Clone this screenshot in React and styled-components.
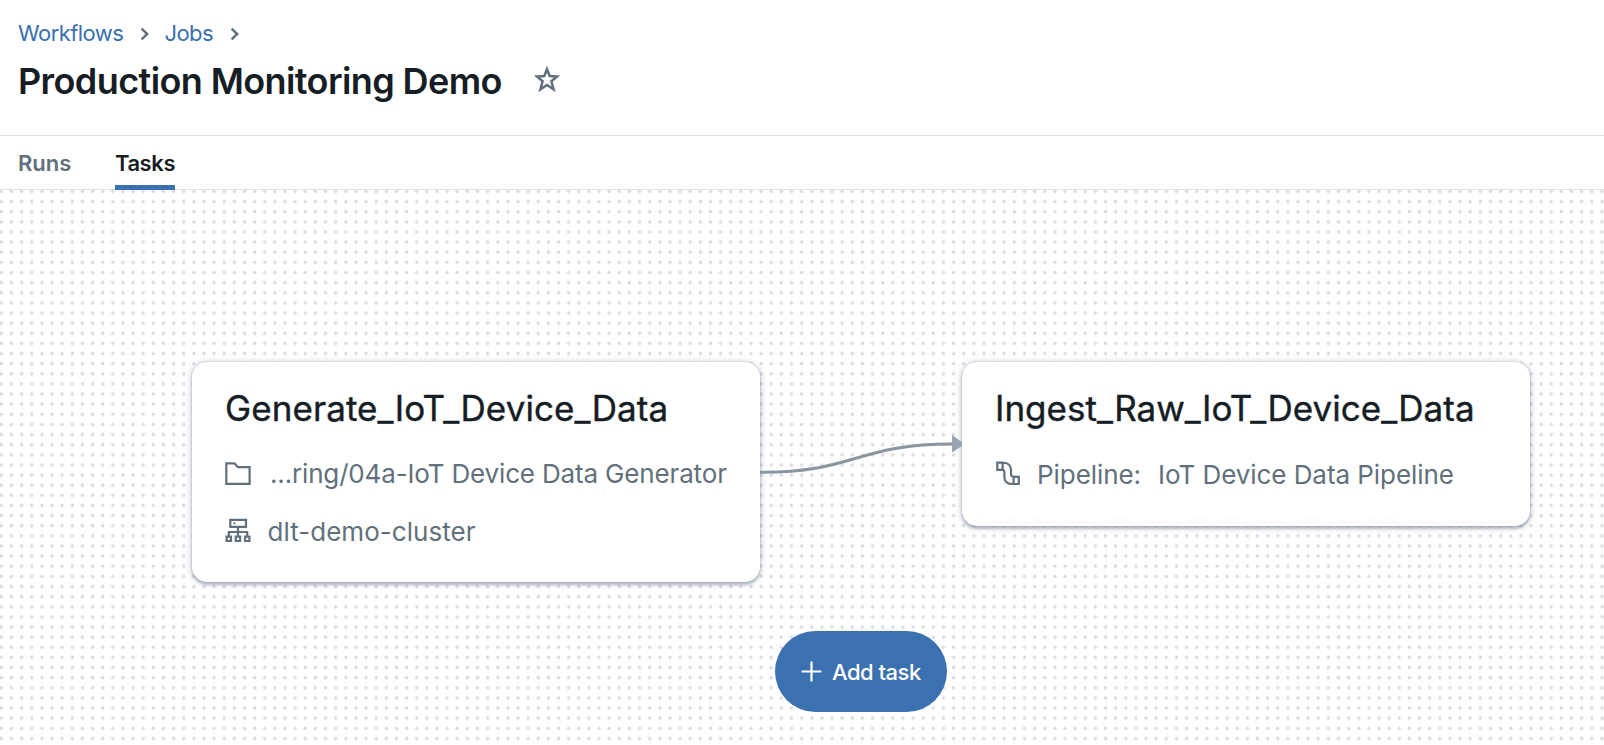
import React from 'react';
import styled, { createGlobalStyle } from 'styled-components';

const GlobalStyle = createGlobalStyle`
  * { box-sizing: border-box; }
  html, body { margin: 0; padding: 0; background: #fff; overflow: hidden; }
  body { font-family: Inter, "Liberation Sans", sans-serif; color: #161d24; }
`;

const Page = styled.div`
  width: 100%;
  height: 100vh;
  display: flex;
  flex-direction: column;
`;

const Header = styled.header`
  height: 136px;
  padding: 20px 18px 0;
  border-bottom: 1px solid #dfe1e8;
  flex: none;
`;

const Breadcrumbs = styled.nav`
  display: flex;
  align-items: center;
  height: 27px;
  line-height: 27px;
  font-size: 22px;
  letter-spacing: -0.55px;
  color: #3a6fb0;
`;

const Crumb = styled.a`
  color: inherit;
`;

const Chevron = styled.svg`
  width: 10px;
  height: 14px;
  margin: 0 14.5px 0 16.5px;
  fill: none;
  stroke: #62707d;
  stroke-width: 2.5;
`;

const TitleRow = styled.div`
  display: flex;
  align-items: center;
  margin-top: 12px;
`;

const Title = styled.h1`
  margin: 0;
  font-size: 36px;
  line-height: 44px;
  font-weight: 600;
  letter-spacing: -0.6px;
`;

const Star = styled.svg`
  width: 28px;
  height: 28px;
  margin: -4px 0 0 31px;
  fill: none;
  stroke: #62707d;
  stroke-width: 2.5;
`;

const Tabs = styled.div`
  display: flex;
  flex: none;
  height: 54px;
  gap: 43.5px;
  padding: 0 18px;
  border-bottom: 1px solid #dfe1e8;
`;

const Tab = styled.button`
  height: 54px;
  padding: 14px 0 9px;
  border: 0;
  border-bottom: 5px solid ${(p) => (p.$active ? '#3a70b2' : 'transparent')};
  background: none;
  font: 600 22px/26px Inter, sans-serif;
  letter-spacing: ${(p) => (p.$active ? '-0.4px' : '0')};
  color: ${(p) => (p.$active ? '#161d24' : '#62707d')};
`;

const Canvas = styled.main`
  position: relative;
  flex: 1;
  overflow: hidden;
`;

const Backdrop = styled.svg`
  position: absolute;
  inset: 0;
  width: 100%;
  height: 100%;
`;

const Node = styled.section`
  position: absolute;
  left: ${(p) => p.$x}px;
  top: ${(p) => p.$y}px;
  width: 568px;
  height: ${(p) => p.$h}px;
  padding: 24px 32px 0 33px;
  border-radius: 15px;
  background: #fff;
  box-shadow: 0 0 0 1px rgba(95, 110, 130, 0.1), 0 3px 2px rgba(95, 110, 130, 0.3),
    0 1px 5px 2px rgba(95, 110, 130, 0.26);
`;

const NodeTitle = styled.h2`
  margin: 0 0 ${(p) => p.$gap}px;
  font-size: 35px;
  line-height: 44px;
  font-weight: 400;
  -webkit-text-stroke: 0.4px currentColor;
  letter-spacing: ${(p) => p.$track}px;
  white-space: nowrap;
`;

const NodeRow = styled.div`
  display: flex;
  align-items: center;
  height: 32px;
  line-height: 32px;
  font-size: 26px;
  color: #62707d;
  white-space: nowrap;
  gap: ${(p) => p.$gap}px;
  letter-spacing: ${(p) => p.$track || 0}px;

  & + & { margin-top: 26px; }
`;

const RowIcon = styled.svg`
  width: 26px;
  height: 26px;
  margin-top: -2px;
  flex: none;
  fill: none;
  stroke: #62707d;
  stroke-width: 2.2;
`;

const Label = styled.span`
  margin-right: ${(p) => p.$after || 0}px;
`;

const AddButton = styled.button`
  position: absolute;
  left: 775px;
  top: 441px;
  width: 171.5px;
  height: 81px;
  display: flex;
  align-items: center;
  padding: 0 0 0 25.5px;
  gap: 10.5px;
  border: 0;
  border-radius: 41px;
  background: #3b71b1;
  color: #fff;
  font: 500 22px/26px Inter, sans-serif;
  letter-spacing: -0.5px;
`;

const Plus = styled.svg`
  width: 21px;
  height: 21px;
  stroke: #fff;
  stroke-width: 2.2;
`;

function Separator() {
  return (
    <Chevron viewBox="0 0 10 14">
      <path d="M1.6 1.6 L7.2 7 L1.6 12.4" />
    </Chevron>
  );
}

export default function App() {
  return (
    <Page>
      <GlobalStyle />
      <Header>
        <Breadcrumbs>
          <Crumb>Workflows</Crumb>
          <Separator />
          <Crumb>Jobs</Crumb>
          <Separator />
        </Breadcrumbs>
        <TitleRow>
          <Title>Production Monitoring Demo</Title>
          <Star viewBox="0 0 28 28">
            <path d="M14 4.2 L16.7 11 L24 11.5 L18.4 16.2 L20.6 24.4 L14 20 L7.4 24.4 L9.6 16.2 L4 11.5 L11.3 11 Z" />
          </Star>
        </TitleRow>
      </Header>
      <Tabs>
        <Tab>Runs</Tab>
        <Tab $active>Tasks</Tab>
      </Tabs>
      <Canvas>
        <Backdrop>
          <defs>
            <pattern id="dots" x="-3.7" y="-3.6" width="10.13" height="10.13" patternUnits="userSpaceOnUse">
              <circle cx="5.06" cy="5.06" r="1.75" fill="#dcdde4" />
            </pattern>
          </defs>
          <rect width="100%" height="100%" fill="url(#dots)" />
        </Backdrop>
        <Node $x={192} $y={172} $h={220}>
          <NodeTitle $gap={28} $track={0.08}>Generate_IoT_Device_Data</NodeTitle>
          <NodeRow $gap={19} $track={-0.16}>
            <RowIcon viewBox="0 0 26 26">
              <path d="M1.3 3.3 H9.6 L12.8 7.2 H24.6 V23.8 H1.3 Z" />
            </RowIcon>
            <Label>...ring/04a-IoT Device Data Generator</Label>
          </NodeRow>
          <NodeRow $gap={16.5} $track={0.04}>
            <RowIcon viewBox="0 0 26 26">
              <path d="M5.3 1.8 H21 V8.8 H5.3 Z M13 8.8 V18 M3.8 18 V14 H22.2 V18 M1.6 18.6 H6 V23 H1.6 Z M10.8 18.6 H15.2 V23 H10.8 Z M20 18.6 H24.4 V23 H20 Z" />
              <circle cx="9.4" cy="5.3" r="1.1" fill="#62707d" stroke="none" />
            </RowIcon>
            <Label>dlt-demo-cluster</Label>
          </NodeRow>
        </Node>
        <Node $x={962} $y={172} $h={164}>
          <NodeTitle $gap={29} $track={0.02}>Ingest_Raw_IoT_Device_Data</NodeTitle>
          <NodeRow $gap={16} $track={-0.06}>
            <RowIcon viewBox="0 0 26 26">
              <path d="M2.3 1.6 H7.6 V8.8 H2.3 Z M7.6 1.6 C12.6 1.6 16 4.4 16 8.4 V12.8 C16 15 16.6 15.8 18.6 15.8 M7.6 8.8 C9 8.8 9.4 9.8 9.4 11.2 V16.6 C9.4 20.6 12.8 23 17 23 H18.6 M18.6 15.8 H23.8 V23 H18.6 Z" />
            </RowIcon>
            <Label $after={1}>Pipeline:</Label>
            <Label>IoT Device Data Pipeline</Label>
          </NodeRow>
        </Node>
        <Backdrop>
          <path d="M760 282.3 C856 282.3 856 254 953 254" fill="none" stroke="#8995a1" strokeWidth="3" />
          <path d="M952 245 L962 252 V256 L952 262.5 Z" fill="#9aa5b1" />
        </Backdrop>
        <AddButton>
          <Plus viewBox="0 0 21 21">
            <path d="M10.5 0.6 V20.4 M0.6 10.5 H20.4" />
          </Plus>
          Add task
        </AddButton>
      </Canvas>
    </Page>
  );
}
